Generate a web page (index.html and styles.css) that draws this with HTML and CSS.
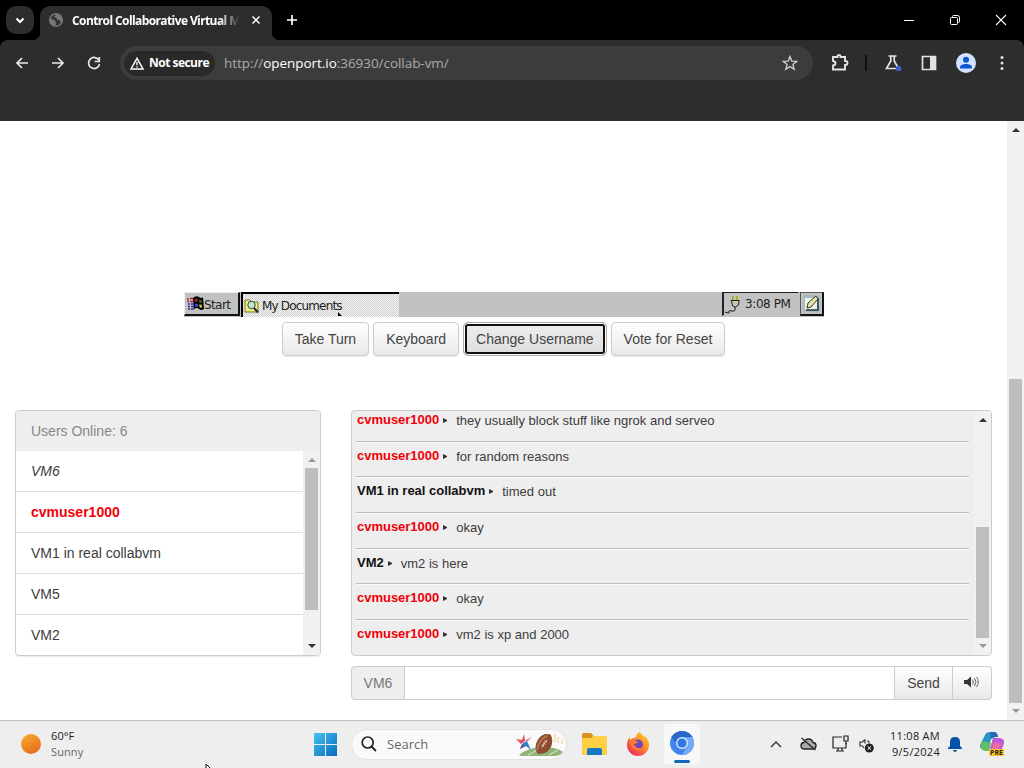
FILE: index.html
```
<!DOCTYPE html>
<html lang="en">
<head>
    <meta charset="UTF-8">
    <meta name="viewport" content="width=device-width, initial-scale=1.0">
    <title>Control Collaborative Virtual Machines</title>
    <link rel="stylesheet" href="styles.css">
</head>
<body>
    <header class="tabstrip">
        <div class="tab-search">
            <svg width="10" height="7" viewBox="0 0 10 7"><path d="M1.500 1.500 5 5l3.500-3.500" fill="none" stroke="#fff" stroke-width="2"/></svg>
        </div>
        <div class="tab">
            <svg class="globe" width="16" height="16" viewBox="0 0 16 16"><circle cx="8" cy="8" r="6.300" fill="#333" stroke="#777" stroke-width="1.500"/><path d="M2 6c2 0 2 2 4 2s1 2 2 3-1 2-1 3C4 13 1 11 2 6M8 2c0 2-2 2-2 3s3 0 3 2 3 0 3 2 1 1 2 0c0-3-2-7-6-7" fill="#777"/></svg>
            <span class="tab-title">Control Collaborative Virtual M</span>
            <svg width="10" height="10" viewBox="0 0 10 10"><path d="m1.500 1.500 7 7m0-7-7 7" stroke="#fff" stroke-width="1.500"/></svg>
        </div>
        <svg class="new-tab" width="12" height="12" viewBox="0 0 12 12"><path d="M6 1v10M1 6h10" stroke="#fff" stroke-width="1.700"/></svg>
        <div class="window-buttons">
            <svg width="12" height="12" viewBox="0 0 12 12"><path d="M1 6.500h10" stroke="#fff"/></svg>
            <svg width="12" height="12" viewBox="0 0 12 12" fill="none" stroke="#fff"><rect x="1.500" y="3.500" width="7" height="7" rx="1"/><path d="M3.500 3V2.500q0-1 1-1h4q2 0 2 2v4q0 1-1 1H9"/></svg>
            <svg width="12" height="12" viewBox="0 0 12 12"><path d="m1 1 10 10M11 1 1 11" stroke="#fff" stroke-width="1.100"/></svg>
        </div>
    </header>
    <nav class="toolbar">
        <div class="nav-buttons">
            <svg width="16" height="16" viewBox="0 0 16 16"><path d="M14 8H3m5-5L3 8l5 5"/></svg>
            <svg width="16" height="16" viewBox="0 0 16 16"><path d="M2 8h11M8 3l5 5-5 5"/></svg>
            <svg width="16" height="16" viewBox="0 0 16 16"><path d="M13 5.500A5.500 5.500 0 1 0 13.500 9"/><path d="M13.300 2v4.500H8.700"/></svg>
        </div>
        <div class="omnibox">
            <div class="not-secure">
                <svg width="14" height="13" viewBox="0 0 14 13"><path d="M7 1.300 13 12H1z" fill="none" stroke="#fff" stroke-width="1.500"/><path d="M7 5v3.200m0 1v1.400" stroke="#fff" stroke-width="1.400"/></svg>
                <span>Not secure</span>
            </div>
            <span class="url">http://<b>openport.io</b>:36930/collab-vm/</span>
            <svg width="16" height="16" viewBox="0 0 16 16"><path d="m8 1.500 1.800 4.600 4.900.3-3.800 3.100 1.300 4.800L8 11.600l-4.200 2.700 1.300-4.800-3.800-3.100 4.900-.3z" fill="none" stroke="#d0d0d0" stroke-width="1.300"/></svg>
        </div>
        <div class="toolbar-icons">
            <svg width="18" height="18" viewBox="0 0 18 18"><path d="M2 3h4.500v-.5a1.500 1.500 0 0 1 3 0V3H14v4h.5a1.500 1.500 0 0 1 0 4H14v4.500H2v-4q2.500-.3 2.500-2.200T2 7z" fill="none" stroke="#e3e3e3" stroke-width="1.900"/></svg>
            <i class="toolbar-sep"></i>
            <svg width="18" height="18" viewBox="0 0 18 18"><path d="M4.500 2h8M6.800 2v5L2.500 14.500h12L10.200 7V2" fill="none" stroke="#e3e3e3" stroke-width="1.700"/><circle cx="14.500" cy="14.500" r="2.800" fill="#4659c8"/></svg>
            <svg width="18" height="18" viewBox="0 0 18 18"><path d="M2.500 2.500h13v13h-13z" fill="none" stroke="#e3e3e3" stroke-width="1.700"/><path d="M10 2h6v14h-6z" fill="#e3e3e3"/></svg>
            <svg width="20" height="20" viewBox="0 0 20 20"><circle cx="10" cy="10" r="10" fill="#d3e3fd"/><circle cx="10" cy="6.800" r="3" fill="#0b57d0"/><path d="M4 15.500v-1.200c0-2.500 3-3.300 6-3.300s6 .8 6 3.300v1.200z" fill="#0b57d0"/></svg>
            <svg class="more" width="4" height="16" viewBox="0 0 4 16" fill="#e3e3e3"><circle cx="2" cy="2.500" r="1.500"/><circle cx="2" cy="8" r="1.500"/><circle cx="2" cy="13.500" r="1.500"/></svg>
        </div>
    </nav>
    <div class="bookmarks"></div>
    <div class="viewport">
        <main class="page">
            <div class="vm-screen">
                <div class="vm-start">
                    <svg width="17" height="15" viewBox="0 0 17 15"><path d="M6 2q3-3 6-1t4 0l1 12q-3 2-5 0t-5 0z" fill="#000"/><path d="M7.500 3.500Q9 2 10.500 3l.3 3q-1.500-1-3 0z" fill="#b2202d"/><path d="M12 3.500q1 .8 2.500.3l.2 3q-1.300.5-2.400-.3z" fill="#287d42"/><path d="M8 8q1.500-1 3 0l.2 3q-1.500-1-3 0z" fill="#3a4ad8"/><path d="M12.300 8.300q1.200.8 2.500.3l.2 3q-1.300.5-2.500-.3z" fill="#d6ce38"/><path d="M0 3h2m1-.5h3M0 5.500h2m1 0h3" stroke="#a0253d" stroke-width="1.500"/><path d="M1 8h2m1 0h3M1 10.500h2m1 0h3M1 13h2m1 0h3" stroke="#30309a" stroke-width="1.500"/></svg>
                    <span>Start</span>
                </div>
                <div class="vm-task">
                    <svg width="16" height="17" viewBox="0 0 16 17"><path d="M1 3h5l1.500 2H14v10H1z" fill="#f0ed82" stroke="#777728"/><circle cx="7.500" cy="8" r="3.700" fill="#bfe8ce" stroke="#314a3b"/><path d="m10 11 4 4.500" stroke="#223" stroke-width="2"/></svg>
                    <span>My Documents</span>
                    <svg class="vm-pointer" width="4" height="5" viewBox="0 0 4 5"><path d="M0 0v4h4z"/></svg>
                </div>
                <div class="vm-tray">
                    <svg width="18" height="19" viewBox="0 0 18 19"><path d="M9 1v5m4-5v5" stroke="#b5b020" stroke-width="2"/><path d="M6.500 5.500h9M7.500 6l1 5 3 1 3-2 .5-4" fill="#c8c8ae" stroke="#222"/><path d="M11 12q1 5-3 4t-3 1-4 0" fill="none" stroke="#111"/></svg>
                    <span>3:08 PM</span>
                </div>
                <div class="vm-pen">
                    <svg width="19" height="19" viewBox="0 0 19 19"><path d="M1 1h17v17H1z" fill="#a9bcc2"/><path d="M3 4h12v12H3z" fill="#eef3e8"/><path d="M16 4v12H4" fill="none" stroke="#234" stroke-width="1.500"/><path d="m5 14 1-5 8-7 2 3-7 8z" fill="#e9e6a8" stroke="#333"/></svg>
                </div>
            </div>
            <div class="vm-buttons">
                <button class="btn">Take Turn</button>
                <button class="btn">Keyboard</button>
                <button class="btn focused">Change Username</button>
                <button class="btn">Vote for Reset</button>
            </div>
            <div class="columns">
                <section class="users">
                    <div class="users-heading">Users Online: 6</div>
                    <div class="users-body">
                        <ul class="users-list">
                            <li class="me">VM6</li>
                            <li class="admin">cvmuser1000</li>
                            <li>VM1 in real collabvm</li>
                            <li>VM5</li>
                            <li>VM2</li>
                        </ul>
                        <div class="scrollbar users-scroll at-top"><i class="up"></i><i class="thumb"></i><i class="down"></i></div>
                    </div>
                </section>
                <section class="chat">
                    <div class="chat-panel">
                        <ul class="chat-list">
                            <li><b class="admin">cvmuser1000</b><i class="caret"></i><span>they usually block stuff like ngrok and serveo</span></li>
                            <li><b class="admin">cvmuser1000</b><i class="caret"></i><span>for random reasons</span></li>
                            <li><b>VM1 in real collabvm</b><i class="caret"></i><span>timed out</span></li>
                            <li><b class="admin">cvmuser1000</b><i class="caret"></i><span>okay</span></li>
                            <li><b>VM2</b><i class="caret"></i><span>vm2 is here</span></li>
                            <li><b class="admin">cvmuser1000</b><i class="caret"></i><span>okay</span></li>
                            <li><b class="admin">cvmuser1000</b><i class="caret"></i><span>vm2 is xp and 2000</span></li>
                        </ul>
                        <div class="scrollbar chat-scroll at-bottom"><i class="up"></i><i class="thumb"></i><i class="down"></i></div>
                    </div>
                    <div class="chat-input">
                        <span class="chat-user">VM6</span>
                        <input type="text" aria-label="Message">
                        <button class="send">Send</button>
                        <button class="sound" aria-label="Sound"><svg width="15" height="12" viewBox="0 0 15 12"><path d="M0 4h3l4-3.500v11L3 8H0z" fill="#333"/><path d="M8.500 3.500q2 2.500 0 5M10.500 2q3 4 0 8M12.500 1q3.500 5 0 10" fill="none" stroke="#555" stroke-width=".9"/></svg></button>
                    </div>
                </section>
            </div>
        </main>
        <div class="scrollbar page-scroll at-bottom"><i class="up"></i><i class="thumb"></i><i class="down"></i></div>
    </div>
    <footer class="taskbar">
        <div class="weather">
            <svg width="20" height="20" viewBox="0 0 20 20"><defs><linearGradient id="sun" x2=".5" y2="1"><stop stop-color="#f5ad31"/><stop offset="1" stop-color="#e9701c"/></linearGradient></defs><circle cx="10" cy="10" r="10" fill="url(#sun)"/></svg>
            <div class="weather-text">
                <div>60°F</div>
                <div class="dim">Sunny</div>
            </div>
        </div>
        <svg class="pointer" width="6" height="5" viewBox="0 0 6 5"><path d="M1 5V1l4 4" fill="#fff" stroke="#111"/></svg>
        <div class="apps">
            <svg class="start" width="23" height="23" viewBox="0 0 23 23"><defs><linearGradient id="win" x2="1" y2="1"><stop stop-color="#46c4ef"/><stop offset="1" stop-color="#0869bd"/></linearGradient></defs><path d="M0 0h11v11H0zM12 0h11v11H12zM0 12h11v11H0zM12 12h11v11H12z" fill="url(#win)"/></svg>
            <div class="search">
                <svg width="16" height="16" viewBox="0 0 16 16"><circle cx="6.700" cy="6.500" r="5.500" fill="none" stroke="#222" stroke-width="1.700"/><path d="m10.500 10.500 4.500 4.500" stroke="#222" stroke-width="1.800"/></svg>
                <span>Search</span>
                <svg class="doodle" width="49" height="27" viewBox="0 0 49 27">
                    <path d="M4 24q10-8 24-8t20 5q-3 4-8 4H6z" fill="#93b477"/><path d="m13 24 9-5m12 5 9-5" stroke="#dde8cf"/>
                    <path d="m1 8 6 1 2-6 1 7-4 3z" fill="#e8505b"/><path d="m10 9 7-3-5 5z" fill="#e88a9e"/><path d="m5 18 3-6 4-2 4 9-5-4z" fill="#2d83c5"/><path d="m5 18 2-5 3 2z" fill="#654b9b"/>
                    <g transform="rotate(-55 29 13)"><path d="M17.500 13q3-7 11.500-7.500T40.500 13Q37 20 29 20.500T17.500 13" fill="#8d4c30"/><path d="M20 11q8-5 18 0" fill="none" stroke="#b87350" stroke-width="2"/><path d="M25 13h9m-7-1.500v3m2.500-3v3m2.500-3v3" stroke="#f2e3d2" stroke-width=".8"/></g>
                    <path d="M40 3v8m3-5v6m4-4v5" stroke="#efc980"/>
                </svg>
            </div>
            <svg class="folder" width="25" height="22" viewBox="0 0 25 22"><path d="M0 2q0-2 2-2h7l3 3h11q2 0 2 2v15q0 2-2 2H0z" fill="#f4bd35"/><path d="M0 2q0-2 2-2h7l2 3-2 2H0z" fill="#d9931f"/><path d="M0 5h9l3-2h11q2 0 2 2v15q0 2-2 2H2q-2 0-2-2z" fill="#ffcf45"/><path d="M5 22v-5q0-2 2-2h11q2 0 2 2v5z" fill="#1678c2"/></svg>
            <svg class="firefox" width="24" height="24" viewBox="0 0 24 24"><defs><linearGradient id="fox" x1="1" x2=".2" y2="1"><stop stop-color="#ffdf32"/><stop offset=".45" stop-color="#ff9028"/><stop offset="1" stop-color="#e9245d"/></linearGradient></defs><path d="M13 0q4 2 5 5l1-1q4 4 4 9a11 11 0 0 1-22 0q0-5 3-8v3l3-2q2 0 3-1 0-3 3-5" fill="url(#fox)"/><circle cx="12" cy="12.500" r="5" fill="#7445bd"/><path d="M4 9q5-2 8 1-1 2-4 2 1 5 8 4-3 4-8 1-4-3-4-8" fill="#ff7932"/></svg>
            <div class="chromium">
                <svg width="24" height="24" viewBox="0 0 24 24"><circle cx="12" cy="12" r="12" fill="#4187eb"/><path d="M1.600 6a12 12 0 0 1 20.800 0L12 6.500 8 15z" fill="#2869c9"/><path d="M22.400 6a12 12 0 0 1-10.400 18l5-9L12 6.500z" fill="#75aaf5"/><circle cx="12" cy="12" r="6" fill="#d7e6ff"/><circle cx="12" cy="12" r="4.600" fill="#3278df"/></svg>
            </div>
        </div>
        <div class="tray">
            <svg width="12" height="8" viewBox="0 0 12 8"><path d="m1 7 5-5 5 5" fill="none" stroke="#333" stroke-width="1.400"/></svg>
            <svg class="cloud" width="17" height="14" viewBox="0 0 17 14"><path d="M4.500 12Q1 12 1 8.800T4 5.500Q5 2 8.500 2T13 5.500q3 .2 3 3.200T13 12z" fill="#aaa" stroke="#222" stroke-width="1.300"/><path d="m2.500 1 13 12" stroke="#ddd" stroke-width="1"/><path d="m1.500 1 14 12" stroke="#222" stroke-width="1.300"/></svg>
            <svg class="network" width="17" height="17" viewBox="0 0 17 17" fill="none" stroke="#222" stroke-width="1.200"><path d="M10 2H1v11h13V8M4 16h8m-6-3v3m4-3v3"/><path d="M12 1h4v5h-4zM14 6v3"/></svg>
            <svg class="mute" width="15" height="15" viewBox="0 0 15 15"><path d="M6 1.500v4M6 1.500 3.500 4H1v4h2.500L5 10M8.500 2.500q1.500 1 1.700 2.500" fill="none" stroke="#333" stroke-width="1.200"/><circle cx="10.300" cy="10" r="4.500" fill="#222"/><path d="m8.600 8.300 3.400 3.400m0-3.400-3.400 3.400" stroke="#fff"/></svg>
            <div class="clock"><div>11:08 AM</div><div>9/5/2024</div></div>
            <svg class="bell" width="14" height="16" viewBox="0 0 14 16"><path d="M2 10V6q0-5 5-5t5 5v4l2 2v1H0v-1z" fill="#0750a8"/><path d="M5 14h4q-.5 2-2 2t-2-2" fill="#0750a8"/></svg>
            <div class="copilot">
                <svg width="24" height="24" viewBox="0 0 24 24"><path d="M5 3q1-3 5-3h4q3 0 4 4l-7 3-3 10H4q-5 0-4-4z" fill="#2698c5"/><path d="M0 13q1 6 6 6h3l2-8-8-2z" fill="#64bc65"/><path d="M13 6h7q5 1 4 5l-3 9H9z" fill="#c15ad6"/><path d="m14 10-3 10h6l4-8z" fill="#ed6e9b"/><path d="M10 0h4q3 0 4 5h-5q-2 0-2 3z" fill="#2865b5"/></svg>
                <span>PRE</span>
            </div>
        </div>
    </footer>
</body>
</html>
```
FILE: styles.css
```
:root {
    --chrome: #2d2d2d;
    --omnibox: #3c3c3c;
    --panel: #eee;
    --border: #ccc;
    --ui: "Open Sans", "Noto Sans", sans-serif;
}
* {
    box-sizing: border-box;
}
body {
    margin: 0;
    width: 1024px;
    height: 768px;
    overflow: hidden;
    display: flex;
    flex-direction: column;
    background: #fff;
    font-family: "Liberation Sans", Arial, sans-serif;
    font-size: 14px;
    color: #3c3c3c;
}
svg {
    display: block;
    flex: none;
}
ul {
    list-style: none;
    margin: 0;
    padding: 0;
}

/* browser */
.tabstrip {
    height: 40px;
    display: flex;
    align-items: center;
    background: #000;
    padding-left: 6px;
    flex: none;
}
.tab-search {
    width: 28px;
    height: 28px;
    border-radius: 10px;
    background: var(--chrome);
    display: flex;
    align-items: center;
    justify-content: center;
}
.tab {
    width: 232px;
    height: 34px;
    margin: 6px 0 0 6px;
    padding: 0 11px 6px 8px;
    border-radius: 10px 10px 0 0;
    background: var(--chrome);
    display: flex;
    align-items: center;
    position: relative;
}
/* curved foot of the active tab */
.tab::before, .tab::after {
    content: "";
    position: absolute;
    bottom: 0;
    left: -8px;
    width: 8px;
    height: 8px;
    background: radial-gradient(circle at 0 0, transparent 8px, var(--chrome) 8.5px);
}
.tab::after {
    left: 232px;
    background: radial-gradient(circle at 100% 0, transparent 8px, var(--chrome) 8.5px);
}
.tab-title {
    width: 168px;
    margin: 0 11px 0 8px;
    overflow: hidden;
    white-space: nowrap;
    font: 700 12px/18px var(--ui);
    letter-spacing: -0.6px;
    color: #fff;
    padding-top: 1px;
    -webkit-mask-image: linear-gradient(90deg, #000 148px, transparent 167px);
    mask-image: linear-gradient(90deg, #000 148px, transparent 167px);
}
.new-tab {
    margin-left: 14px;
}
.window-buttons {
    margin-left: auto;
    padding-right: 17px;
    display: flex;
    gap: 34px;
}
.toolbar {
    height: 41px;
    background: var(--chrome);
    border-radius: 8px 8px 0 0;
    box-shadow: -8px 0 0 #000, 8px 0 0 #000;
    display: flex;
    align-items: center;
    padding: 5px 20px 0 14px;
    flex: none;
}
.nav-buttons {
    display: flex;
    gap: 20px;
    fill: none;
    stroke: #e8e8e8;
    stroke-width: 1.7;
}
.omnibox {
    width: 693px;
    height: 34px;
    margin-left: 18px;
    border-radius: 17px;
    background: var(--omnibox);
    display: flex;
    align-items: center;
    padding: 0 15px 0 4px;
}
.not-secure {
    height: 25px;
    width: 91px;
    border-radius: 13px;
    background: #292929;
    display: flex;
    align-items: center;
    gap: 5px;
    padding-left: 6px;
    color: #fff;
    font: 700 12px/16px var(--ui);
    letter-spacing: -0.52px;
    white-space: nowrap;
}
.url {
    margin-left: 9px;
    flex: 1;
    color: #aaa;
    font: 13.5px/18px var(--ui);
    letter-spacing: -0.05px;
}
.url b {
    font-weight: 400;
    color: #fff;
}
.toolbar-icons {
    margin-left: auto;
    display: flex;
    align-items: center;
    gap: 18px;
}
.toolbar-sep {
    width: 2px;
    height: 16px;
    background: #111;
    margin-left: -2px;
    margin-right: -1px;
}
.more {
    margin-left: 6px;
}
.bookmarks {
    height: 40px;
    background: var(--chrome);
    flex: none;
}
.viewport {
    height: 599px;
    display: flex;
    flex: none;
}
.page {
    width: 1007px;
    padding: 171px 15px 0;
}

/* scrollbars */
.scrollbar {
    width: 17px;
    flex: none;
    background: #f1f1f1;
    display: flex;
    flex-direction: column;
    align-items: center;
    --up: #333;
    --down: #333;
}
.at-top { --up: #999; }
.at-bottom { --down: #999; }
.up, .down {
    border: 4px solid transparent;
    border-top: 0;
    border-bottom: 4px solid var(--up);
}
.down {
    border-bottom: 0;
    border-top: 4px solid var(--down);
    margin-top: auto;
}
.thumb {
    width: 13px;
    background: #bebebe;
}
.page-scroll { padding: 7px 0; }
.page-scroll .thumb { height: 324px; margin-top: 247px; }
.users-scroll { padding: 7px 0; }
.users-scroll .thumb { height: 142px; margin-top: 6px; }
.chat-scroll { padding: 7px 0; }
.chat-scroll .thumb { height: 111px; margin-top: 105px; }

/* VM display */
.vm-screen {
    width: 640px;
    height: 25px;
    margin: 0 0 0 169px;
    background: #c2c2c2;
    display: flex;
    font: 12px/20px "DejaVu Sans", sans-serif;
    color: #222;
    white-space: nowrap;
}
.vm-start {
    width: 56px;
    height: 24px;
    padding: 0 2px;
    display: flex;
    align-items: center;
    border: 1px solid #eee;
    border-right: 2px solid #111;
    border-bottom: 2px solid #111;
    letter-spacing: -0.6px;
}
.vm-start span {
    padding-top: 2px;
}
.vm-task {
    width: 158px;
    margin-left: 1px;
    border-top: 2px solid #000;
    border-left: 2px solid #000;
    background: repeating-conic-gradient(#d0d0d0 0 25%, #f4f4f4 0 50%) 0 0 / 2px 2px;
    display: flex;
    align-items: center;
    padding-left: 1px;
    gap: 2px;
    position: relative;
    letter-spacing: -0.83px;
}
.vm-pointer {
    position: absolute;
    left: 95px;
    bottom: 0;
}
.vm-tray {
    width: 77px;
    height: 24px;
    margin-left: auto;
    border: 1px solid #c2c2c2;
    border-top: 1px solid #222;
    border-left: 2px solid #222;
    display: flex;
    align-items: center;
    gap: 3px;
    letter-spacing: -0.4px;
}
.vm-pen {
    width: 24px;
    height: 24px;
    margin-left: 1px;
    border: 1px solid #555;
    border-right: 2px solid #111;
    border-bottom: 2px solid #111;
    padding: 1px;
}
.vm-buttons {
    display: flex;
    justify-content: center;
    gap: 4px;
    margin: 5px 0 54px;
}
button {
    font: 14px/20px "Liberation Sans", Arial, sans-serif;
    color: #444;
    border: 1px solid var(--border);
    background: linear-gradient(#fff, #e8e8e8);
}
.btn {
    height: 34px;
    padding: 0 12px;
    border-radius: 4px;
    box-shadow: 0 1px 1px rgba(0, 0, 0, .08);
    white-space: nowrap;
}
.btn.focused {
    border: 1px solid #aaa;
    box-shadow: inset 0 0 0 1px #fff, inset 0 0 0 3px #111;
    border-radius: 5px;
    background: linear-gradient(#eee, #ddd);
}

/* users and chat */
.columns {
    display: flex;
    gap: 30px;
}
.users {
    width: 306px;
    height: 246px;
    border: 1px solid var(--border);
    border-radius: 4px;
    overflow: hidden;
    box-shadow: 0 1px 1px rgba(0, 0, 0, .08);
}
.users-heading {
    height: 40px;
    padding: 0 15px;
    background: var(--panel);
    line-height: 41px;
    color: #888;
}
.users-body {
    height: 204px;
    display: flex;
}
.users-list {
    flex: 1;
}
.users-list li {
    height: 41px;
    padding: 0 15px;
    line-height: 40px;
    border-bottom: 1px solid #ddd;
}
.users-list li:last-child {
    border: 0;
}
.me {
    font-style: italic;
}
.admin {
    font-weight: bold;
    color: #f00008;
}
.chat {
    width: 641px;
    flex: none;
}
.chat-panel {
    height: 246px;
    display: flex;
    background: var(--panel);
    border: 1px solid var(--border);
    border-radius: 4px;
    overflow: hidden;
}
.chat-list {
    flex: 1;
    padding: 0 5px 0 4px;
    margin-top: -5px;
    font-size: 13px;
}
.chat-list li {
    height: 35.7px;
    width: 613px;
    border-bottom: 1px solid #bdbdbd;
    box-shadow: 0 1px #fafafa;
    line-height: 18px;
    padding: 5px 1px 0;
    display: flex;
    white-space: nowrap;
}
.chat-list b {
    color: #111;
    letter-spacing: -0.02px;
}
.chat-list .admin {
    color: #f00008;
}
.chat-list span {
    padding-top: 1px;
    letter-spacing: 0.01px;
}
.caret {
    border: 2.5px solid transparent;
    border-left: 4px solid #333;
    border-right: 0;
    height: 5px;
    margin: 7px 9px 0 4px;
}
.chat-input {
    height: 34px;
    margin-top: 10px;
    display: flex;
}
.chat-user {
    width: 54px;
    border: 1px solid var(--border);
    border-radius: 4px 0 0 4px;
    background: var(--panel);
    color: #777;
    text-align: center;
    line-height: 33px;
}
.chat-input input {
    flex: 1;
    min-width: 0;
    border: 1px solid var(--border);
    border-width: 1px 0;
}
.send {
    width: 59px;
    padding: 0;
}
.sound {
    width: 39px;
    border-left: 0;
    border-radius: 0 4px 4px 0;
    padding: 0 0 2px 11px;
}

/* taskbar */
.taskbar {
    height: 48px;
    flex: none;
    border-top: 1px solid #bfbfbf;
    background: #eee;
    position: relative;
    display: flex;
    align-items: center;
    font: 11px/16px var(--ui);
    color: #222;
}
.weather {
    width: 314px;
    display: flex;
    align-items: center;
    gap: 10px;
    padding: 0 0 2px 21px;
}
.weather-text {
    letter-spacing: 0.1px;
}
.dim {
    color: #666;
}
.pointer {
    position: absolute;
    left: 205px;
    bottom: 0;
}
.apps {
    display: flex;
    align-items: center;
    padding-bottom: 1px;
}
.search {
    width: 216px;
    height: 31px;
    margin: 0 14px;
    border: 1px solid #e3e3e3;
    border-radius: 16px;
    background: #fafafa;
    display: flex;
    align-items: center;
    gap: 10px;
    padding: 0 2px 0 9px;
    color: #666;
    font-size: 13px;
}
.doodle {
    margin-left: auto;
}
.folder {
    margin-left: 1px;
}
.firefox {
    margin: 0 14px 0 19px;
}
.chromium {
    width: 36px;
    height: 40px;
    padding: 7px 6px 0;
    border-radius: 4px;
    background: #f8f8f8;
    position: relative;
}
.chromium::after {
    content: "";
    position: absolute;
    left: 10px;
    bottom: 1px;
    width: 16px;
    height: 3px;
    border-radius: 2px;
    background: #1468b8;
}
.tray {
    margin-left: auto;
    padding: 0 20px 2px 0;
    display: flex;
    align-items: center;
}
.cloud {
    margin-left: 18px;
}
.network {
    margin-left: 15px;
}
.mute {
    margin: 3px 15px 0 10px;
}
.clock {
    width: 51px;
    text-align: right;
    letter-spacing: 0.28px;
    white-space: nowrap;
}
.bell {
    margin: 0 18px 0 8px;
}
.copilot {
    position: relative;
}
.copilot span {
    position: absolute;
    right: 0;
    bottom: 0;
    padding: 0 1px;
    background: #f8c934;
    border-radius: 1px;
    color: #321;
    font: 700 7px/7px var(--ui);
}
```
